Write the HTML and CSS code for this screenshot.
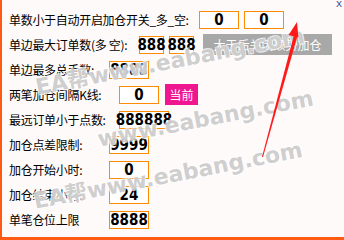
FILE: index.html
```html
<!DOCTYPE html>
<html lang="zh-CN">
<head>
<meta charset="utf-8">
<title>加仓设置</title>
<link rel="stylesheet" href="styles.css">
</head>
<body>
<div class="panel">
  <div class="close">X</div>
  <div class="row">
    <span class="label w190">单数小于自动开启加仓开关_多_空:</span>
    <span class="box w40">0</span>
    <span class="box w40">0</span>
  </div>
  <div class="row">
    <span class="label w130">单边最大订单数(多 空):</span>
    <span class="box w25">888</span>
    <span class="box w25">888</span>
    <span class="btn gray">大于后关闭顺势加仓</span>
  </div>
  <div class="row">
    <span class="label w100">单边最多总手数:</span>
    <span class="box w40">8888</span>
  </div>
  <div class="row">
    <span class="label w110">两笔加仓间隔K线:</span>
    <span class="box w40">0</span>
    <span class="btn pink">当前</span>
  </div>
  <div class="row">
    <span class="label w110">最远订单小于点数:</span>
    <span class="box w50">888888</span>
  </div>
  <div class="row">
    <span class="label w100">加仓点差限制:</span>
    <span class="box w40">9999</span>
  </div>
  <div class="row">
    <span class="label w100">加仓开始小时:</span>
    <span class="box w40">0</span>
  </div>
  <div class="row">
    <span class="label w100">加仓结束小时:</span>
    <span class="box w40">24</span>
  </div>
  <div class="row">
    <span class="label w100">单笔仓位上限</span>
    <span class="box w40">8888</span>
  </div>

  <span class="mark m1">EA帮www.eabang.com</span>
  <span class="mark m2">www.eabang.com</span>
  <span class="mark m3">EA帮www.eabang.com</span>

  <svg class="arrow" width="344" height="240" viewBox="0 0 344 240">
    <polygon points="294.5,33 298,34 263,157 262,157" fill="#ff1a1a"/>
    <polygon points="297,22 288.6,35 298.4,37.5" fill="#ff1a1a"/>
  </svg>
</div>
</body>
</html>
```

FILE: styles.css
```css
html, body {
  margin: 0;
  padding: 0;
  background: #fffafa;
}

.panel {
  position: relative;
  width: 344px;
  height: 240px;
  box-sizing: border-box;
  border-left: 2px solid #ff5a14;
  border-bottom: 3px solid #ff5a14;
  background: #fffafa;
  padding: 7px 0 0 7px;
  overflow: hidden;
  font-family: "Noto Sans CJK SC", "Liberation Sans", sans-serif;
  font-size: 12px;
  color: #000;
}

.close {
  position: absolute;
  top: 0;
  right: 2px;
  font-family: "Liberation Sans", sans-serif;
  font-size: 9px;
  line-height: 9px;
  color: #1c3d8c;
}

.row {
  display: flex;
  align-items: center;
  height: 25px;
}

.label {
  flex: none;
  white-space: nowrap;
  line-height: 16px;
  letter-spacing: -0.3px;
}

.w190 { width: 190px; }
.w130 { width: 130px; }
.w110 { width: 110px; }
.w100 { width: 100px; }

.box {
  flex: none;
  box-sizing: border-box;
  height: 18px;
  border: 1px solid #ff8c00;
  background: #ffffff;
  display: flex;
  align-items: center;
  justify-content: center;
  font-family: "Liberation Sans Narrow", "DejaVu Sans Condensed", sans-serif;
  font-weight: bold;
  font-size: 15px;
  margin-right: 5px;
}

.box.w40 { width: 40px; }
.box.w25 { width: 25px; margin-right: 5px; }
.box.w50 { width: 50px; }

.btn {
  flex: none;
  box-sizing: border-box;
  height: 21px;
  display: flex;
  align-items: center;
  justify-content: center;
  color: #ffffff;
  font-size: 12px;
}

.gray {
  width: 129px;
  margin-left: 4px;
  background: #a8a8a8;
}

.pink {
  width: 33px;
  margin-left: 1px;
  background: #f0168f;
}

.mark {
  position: absolute;
  white-space: nowrap;
  font-family: "DejaVu Sans", "Noto Sans CJK SC", sans-serif;
  font-weight: bold;
  font-size: 22px;
  line-height: 24px;
  color: rgba(175, 175, 175, 0.6);
  text-shadow:
    1px 1px 0 rgba(255,255,255,0.6),
    -1px -1px 0 rgba(255,255,255,0.6),
    1px -1px 0 rgba(255,255,255,0.6),
    -1px 1px 0 rgba(255,255,255,0.6);
  transform-origin: 0 50%;
  transform: rotate(-11deg);
  pointer-events: none;
}

.m1 { left: 34px; top: 76px; }
.m2 { left: 96px; top: 128px; }
.m3 { left: 32px; top: 190px; }

.arrow {
  position: absolute;
  left: -2px;
  top: 0;
  pointer-events: none;
}
```
